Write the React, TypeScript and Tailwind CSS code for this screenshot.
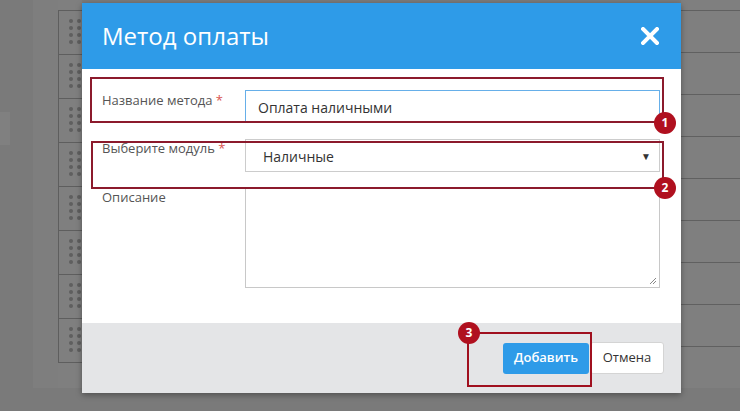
import React from 'react'

const rows = [0, 1, 2, 3, 4, 5, 6, 7, 8]

function GripDots() {
  return (
    <div className="grid w-fit grid-cols-2 gap-x-[4px] gap-y-[3px] pl-[10px] pt-[8px]">
      {Array.from({ length: 8 }).map((_, i) => (
        <span key={i} className="h-[4px] w-[4px] rounded-full bg-[#5f5f5f]" />
      ))}
    </div>
  )
}

function Badge({ n }: { n: number }) {
  return (
    <span className="flex h-[22px] w-[22px] items-center justify-center rounded-full bg-[#b0101f] text-[12px] font-bold text-white">
      {n}
    </span>
  )
}

export default function App() {
  return (
    <div
      className="relative h-[411px] w-[740px] overflow-hidden bg-[#7a7a7a]"
      style={{ fontFamily: '"Open Sans", "Noto Sans", sans-serif' }}
    >
      {/* background page */}
      <div className="flex h-[388px]">
        <div className="w-[33px] pt-[112px]">
          <div className="h-[33px] w-[10px] bg-[#808080]" />
        </div>
        <div className="w-[25px] bg-[#7e7e7e]" />
        <div className="flex w-[24px] flex-col bg-[#7f7f7f] pt-[10px]">
          {rows.slice(0, 8).map((r) => (
            <div key={r} className="h-[44px] border-l border-t border-[#5e5e5e]">
              <GripDots />
            </div>
          ))}
          <div className="border-t border-[#5e5e5e]" />
        </div>
        <div className="flex-1" />
        <div className="flex w-[59px] flex-col bg-[#7f7f7f] pt-[10px]">
          {rows.map((r) => (
            <div key={r} className="h-[44px] border-t border-[#606060]" />
          ))}
        </div>
      </div>

      {/* modal */}
      <div className="absolute left-[82px] top-[3px] flex h-[390px] w-[599px] flex-col shadow-[0_2px_6px_rgba(0,0,0,0.35)]">
        <div className="flex h-[66px] items-center justify-between bg-[#2e9be8] pl-[20px] pr-[22px]">
          <h2 className="text-[24px] font-normal leading-none text-white">Метод оплаты</h2>
          <svg width="18" height="18" viewBox="0 0 18 18">
            <path d="M2 2L16 16M16 2L2 16" stroke="white" strokeWidth="4" strokeLinecap="square" />
          </svg>
        </div>

        <div className="flex flex-1 flex-col gap-[16px] bg-white pl-[20px] pr-[21px] pt-[21px]">
          <div className="flex">
            <label className="w-[143px] pt-[1px] text-[13px] text-[#555]">
              Название метода <span className="text-[#d9534f]">*</span>
            </label>
            <div className="flex h-[33px] flex-1 items-center border border-[#66afe9] px-[12px] pt-[2px] text-[14px] text-[#333]">
              Оплата наличными
            </div>
          </div>
          <div className="flex">
            <label className="w-[143px] text-[13px] text-[#555]">
              Выберите модуль <span className="text-[#d9534f]">*</span>
            </label>
            <div className="flex h-[33px] flex-1 items-center justify-between border border-[#ccc] pl-[17px] pr-[8px] pt-[1px] text-[14px] text-[#333]">
              <span>Наличные</span>
              <span className="text-[10px] text-[#333]">▼</span>
            </div>
          </div>
          <div className="flex">
            <label className="w-[143px] text-[13px] text-[#555]">Описание</label>
            <div className="relative h-[100px] flex-1 border border-[#c8c8c8]">
              <svg className="absolute bottom-[2px] right-[2px]" width="8" height="8" viewBox="0 0 8 8">
                <path d="M1 7L7 1M4 7L7 4" stroke="#888" strokeWidth="1" />
              </svg>
            </div>
          </div>
        </div>

        <div className="flex h-[70px] items-center justify-end gap-[1px] bg-[#e4e5e7] pr-[17px]">
          <button className="h-[31px] w-[86px] rounded-[3px] bg-[#2e9be8] text-[13px] font-semibold text-white">
            Добавить
          </button>
          <button className="h-[32px] w-[74px] rounded-[3px] border border-[#d4d4d4] bg-white text-[13px] text-[#333]">
            Отмена
          </button>
        </div>
      </div>

      {/* annotations */}
      <div className="absolute left-[90px] top-[77px] h-[46px] w-[574px] border-2 border-[#8c1a2c]" />
      <div className="absolute left-[654px] top-[112px]">
        <Badge n={1} />
      </div>
      <div className="absolute left-[91px] top-[141px] h-[48px] w-[573px] border-2 border-[#8c1a2c]" />
      <div className="absolute left-[654px] top-[177px]">
        <Badge n={2} />
      </div>
      <div className="absolute left-[467px] top-[332px] h-[55px] w-[125px] border-2 border-[#a0101f]" />
      <div className="absolute left-[458px] top-[322px]">
        <Badge n={3} />
      </div>
    </div>
  )
}
